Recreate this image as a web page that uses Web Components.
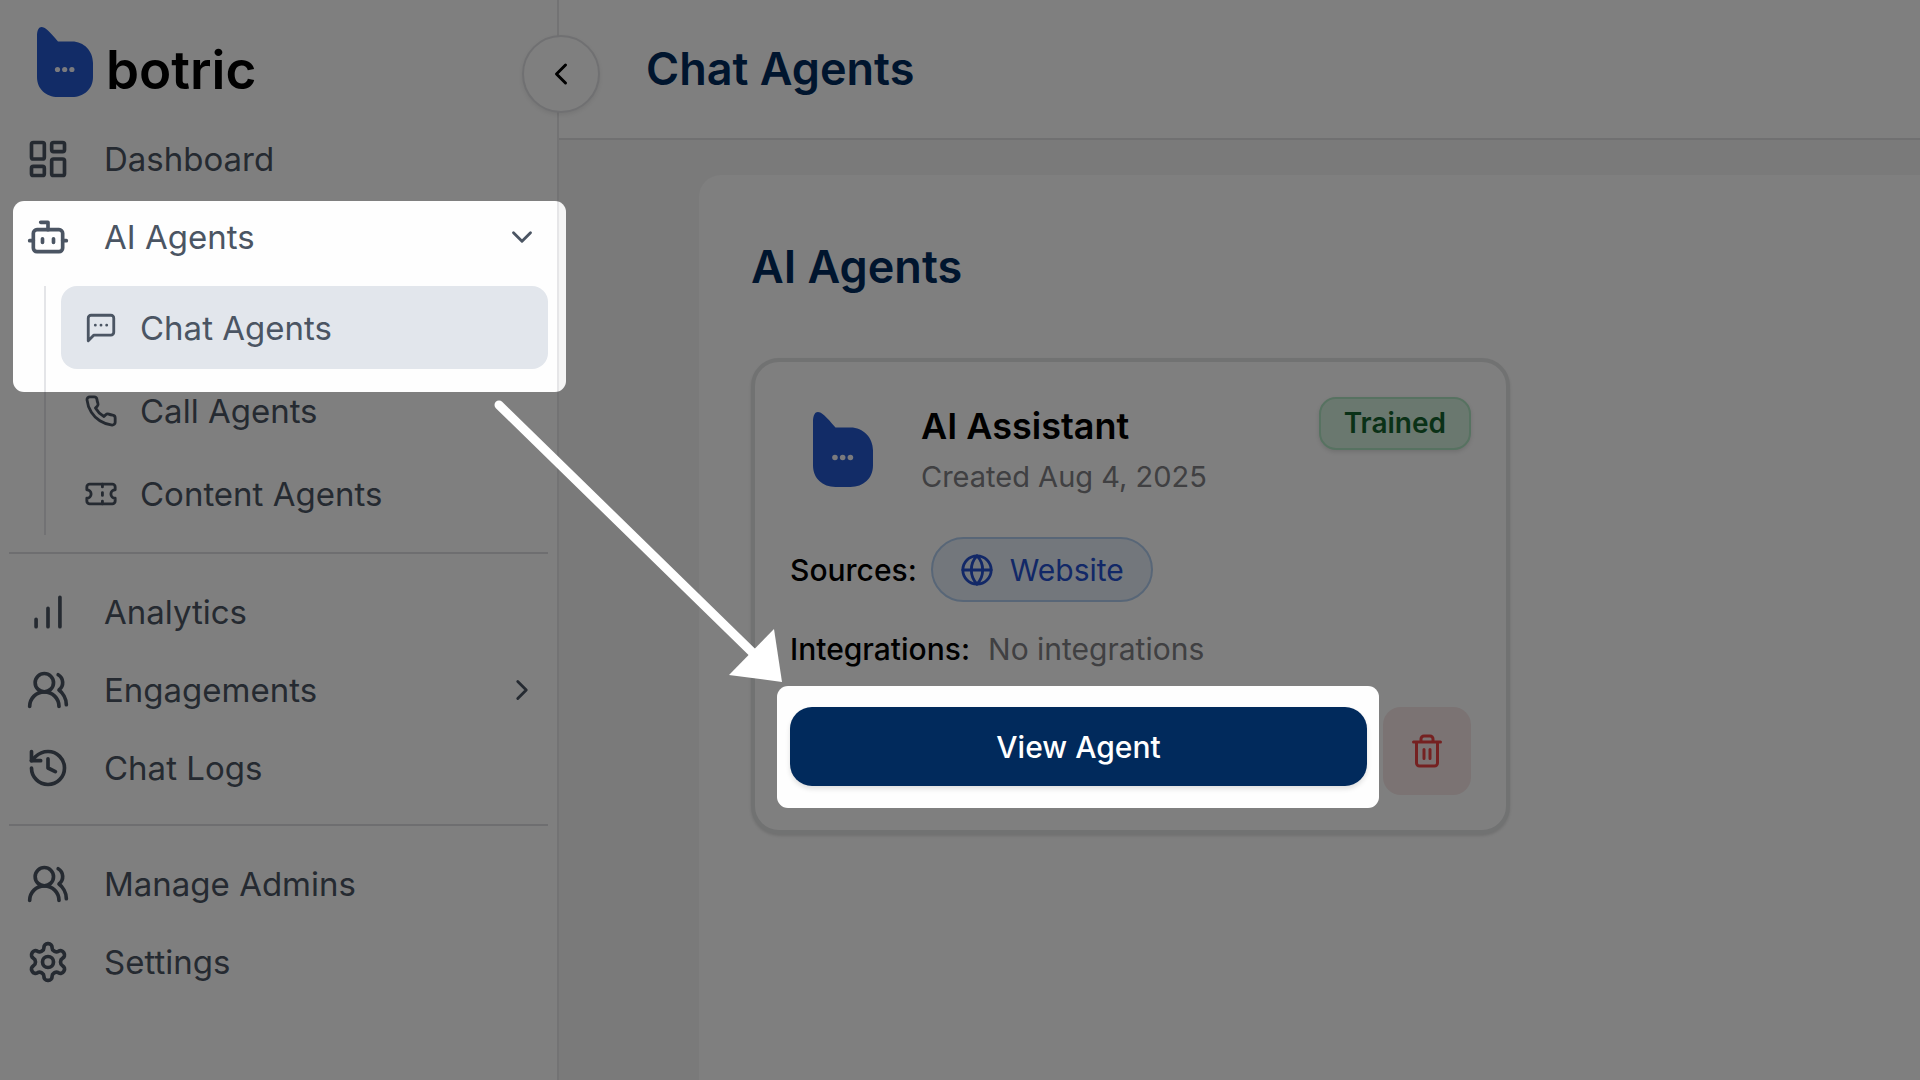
<!DOCTYPE html>
<html lang="en">
<head>
<meta charset="utf-8">
<title>Chat Agents - botric</title>
<style>
  html, body { margin: 0; height: 100%; }
  body { font-family: Inter, "Open Sans", sans-serif; background: #f5f5f5; overflow: hidden; }
</style>
</head>
<body>
<botric-app></botric-app>
<script>
const define = (name, html, setup) => {
  const tpl = document.createElement('template');
  tpl.innerHTML = html;
  customElements.define(name, class extends HTMLElement {
    constructor() {
      super();
      this.attachShadow({ mode: 'open' }).append(tpl.content.cloneNode(true));
    }
    connectedCallback() { if (setup) setup(this, this.shadowRoot); }
  });
};

const ICONS = {
  dashboard: '<rect width="7" height="9" x="3" y="3" rx="1"/><rect width="7" height="5" x="14" y="3" rx="1"/><rect width="7" height="9" x="14" y="12" rx="1"/><rect width="7" height="5" x="3" y="16" rx="1"/>',
  bot: '<path d="M12 8V4H8"/><rect width="16" height="12" x="4" y="8" rx="2"/><path d="M2 14h2M20 14h2M15 13v2M9 13v2"/>',
  chat: '<path d="M21 15a2 2 0 0 1-2 2H7l-4 4V5a2 2 0 0 1 2-2h14a2 2 0 0 1 2 2z"/><path d="M8 10h.01M12 10h.01M16 10h.01"/>',
  phone: '<path d="M22 16.92v3a2 2 0 0 1-2.18 2 19.79 19.79 0 0 1-8.63-3.07 19.5 19.5 0 0 1-6-6 19.79 19.79 0 0 1-3.07-8.67A2 2 0 0 1 4.11 2h3a2 2 0 0 1 2 1.72 12.84 12.84 0 0 0 .7 2.81 2 2 0 0 1-.45 2.11L8.09 9.91a16 16 0 0 0 6 6l1.27-1.27a2 2 0 0 1 2.11-.45 12.84 12.84 0 0 0 2.81.7A2 2 0 0 1 22 16.92z"/>',
  ticket: '<path d="M2 9a3 3 0 0 1 0 6v2a2 2 0 0 0 2 2h16a2 2 0 0 0 2-2v-2a3 3 0 0 1 0-6V7a2 2 0 0 0-2-2H4a2 2 0 0 0-2 2Z"/><path d="M13 5v2M13 17v2M13 11v2"/>',
  bars: '<path d="M18.5 20V4M12 20V10M5.5 20v-4"/>',
  users: '<path d="M18 21a8 8 0 0 0-16 0"/><circle cx="10" cy="8" r="5"/><path d="M22 20c0-3.37-2-6.5-4-8a5 5 0 0 0-.45-8.3"/>',
  history: '<path d="M3 12a9 9 0 1 0 9-9 9.75 9.75 0 0 0-6.74 2.74L3 8"/><path d="M3 3v5h5"/><path d="M12 7v5l4 2"/>',
  settings: '<path d="M12.22 2h-.44a2 2 0 0 0-2 2v.18a2 2 0 0 1-1 1.73l-.43.25a2 2 0 0 1-2 0l-.15-.08a2 2 0 0 0-2.73.73l-.22.38a2 2 0 0 0 .73 2.73l.15.1a2 2 0 0 1 1 1.72v.51a2 2 0 0 1-1 1.74l-.15.09a2 2 0 0 0-.73 2.73l.22.38a2 2 0 0 0 2.73.73l.15-.08a2 2 0 0 1 2 0l.43.25a2 2 0 0 1 1 1.73V20a2 2 0 0 0 2 2h.44a2 2 0 0 0 2-2v-.18a2 2 0 0 1 1-1.73l.43-.25a2 2 0 0 1 2 0l.15.08a2 2 0 0 0 2.73-.73l.22-.39a2 2 0 0 0-.73-2.73l-.15-.08a2 2 0 0 1-1-1.74v-.5a2 2 0 0 1 1-1.74l.15-.09a2 2 0 0 0 .73-2.73l-.22-.38a2 2 0 0 0-2.73-.73l-.15.08a2 2 0 0 1-2 0l-.43-.25a2 2 0 0 1-1-1.73V4a2 2 0 0 0-2-2z"/><circle cx="12" cy="12" r="3"/>',
  globe: '<circle cx="12" cy="12" r="10"/><path d="M12 2a14.5 14.5 0 0 0 0 20 14.5 14.5 0 0 0 0-20M2 12h20"/>',
  trash: '<path d="M3 6h18M19 6v14a2 2 0 0 1-2 2H7a2 2 0 0 1-2-2V6M8 6V4a2 2 0 0 1 2-2h4a2 2 0 0 1 2 2v2M10 11v6M14 11v6"/>',
  left: '<path d="m15 18-6-6 6-6"/>',
  right: '<path d="m9 18 6-6-6-6"/>',
  down: '<path d="m6 9 6 6 6-6"/>'
};

/* Stroke icon: <ui-icon name="..."> */
define('ui-icon', `
<style>
  :host { display: block; flex: none; width: var(--icon-size, 44px); height: var(--icon-size, 44px); }
  svg { display: block; width: 100%; height: 100%; }
</style>
<svg viewBox="0 0 24 24" fill="none" stroke="currentColor" stroke-width="2" stroke-linecap="round" stroke-linejoin="round" aria-hidden="true"></svg>`,
(el, root) => { root.querySelector('svg').innerHTML = ICONS[el.getAttribute('name')] || ''; });

/* Brand mark */
define('botric-mark', `
<style>
  :host { display: block; flex: none; width: var(--mark-width, 56px); }
  svg { display: block; width: 100%; }
</style>
<svg viewBox="0 0 56 70" role="img" aria-label="botric">
  <path fill="#2459cf" d="M0 9C0 3 2 0 4.500 0C8 0 12 4 21 14.500H35C47 14.500 56 24 56 36V50C56 62 47 70 35 70H21C9 70 0 62 0 50Z"/>
  <g fill="#f4f4fa"><circle cx="20.500" cy="42.500" r="2.600"/><circle cx="27.700" cy="42.500" r="2.600"/><circle cx="34.900" cy="42.500" r="2.600"/></g>
</svg>`);

const makeIcon = (className, name) => {
  const icon = document.createElement('ui-icon');
  icon.className = className;
  icon.setAttribute('name', name);
  return icon;
};

/* Sidebar row; "sub" makes the nested size, "active" the filled state, "end" adds a chevron */
define('nav-item', `
<style>
  :host { display: block; }
  a { display: flex; align-items: center; gap: 34px; height: 78px; padding: 0 9px 0 17px; color: #4b5563;
      font-size: 33px; line-height: 48px; text-decoration: none; white-space: nowrap; box-sizing: border-box; }
  .label { flex: 1; }
  .end { --icon-size: 34px; }
  :host([sub]) a { height: 83px; padding: 0 23px; gap: 22px; border-radius: 16px; }
  :host([sub]) { --icon-size: 34px; }
  :host([active]) a { background: #e2e6ec; }
</style>
<a href="#"><span class="label"><slot></slot></span></a>`,
(el, root) => {
  const link = root.querySelector('a');
  link.prepend(makeIcon('start', el.getAttribute('icon')));
  if (el.hasAttribute('end')) link.append(makeIcon('end', el.getAttribute('end')));
  if (el.hasAttribute('active')) link.setAttribute('aria-current', 'page');
});

define('side-bar', `
<style>
  :host { display: block; position: relative; box-sizing: border-box; width: 559px; flex: none;
          padding: 0 9px; background: #fefefe; border-right: 2px solid #e6e6e8; }
  .brand { display: flex; align-items: center; gap: 13px; height: 120px; padding: 4px 28px 0; box-sizing: border-box; }
  .word { font-size: 53px; line-height: 60px; font-weight: 600; color: #000; padding-top: 16px; }
  .sub { margin: 10px 0 0 35px; padding-left: 15px; border-left: 2px solid #e4e5e8; }
  hr { border: 0; height: 2px; margin: 17px 0 19px; background: #dcdde0; }
  button { position: absolute; right: -43px; top: 35px; width: 78px; height: 78px; padding: 0; box-sizing: border-box;
           display: grid; place-items: center; border-radius: 50%; border: 2px solid #e0e1e4; background: #fefefe;
           color: #000; box-shadow: 0 2px 4px rgba(0,0,0,.08); --icon-size: 36px; }
</style>
<div class="brand"><botric-mark></botric-mark><span class="word">botric</span></div>
<nav>
  <nav-item icon="dashboard">Dashboard</nav-item>
  <nav-item icon="bot" end="down">AI Agents</nav-item>
  <div class="sub">
    <nav-item sub active icon="chat">Chat Agents</nav-item>
    <nav-item sub icon="phone">Call Agents</nav-item>
    <nav-item sub icon="ticket">Content Agents</nav-item>
  </div>
  <hr>
  <nav-item icon="bars">Analytics</nav-item>
  <nav-item icon="users" end="right">Engagements</nav-item>
  <nav-item icon="history">Chat Logs</nav-item>
  <hr>
  <nav-item icon="users">Manage Admins</nav-item>
  <nav-item icon="settings">Settings</nav-item>
</nav>
<button type="button" aria-label="Collapse sidebar"><ui-icon name="left"></ui-icon></button>`);

define('agent-card', `
<style>
  :host { display: block; box-sizing: border-box; width: 759px; max-width: 100%; padding: 35px; background: #fefefe;
          border: 4px solid #e3e4e5; border-radius: 28px; box-shadow: 0 2px 3px rgba(0,0,0,.12);
          font-size: 30px; line-height: 42px; }
  .top { display: flex; gap: 26px; height: 104px; }
  .avatar { display: grid; place-items: center; width: 105px; --mark-width: 60px; }
  .who { flex: 1; }
  h3 { margin: 0; font-size: 36px; line-height: 58px; font-weight: 600; color: #000; }
  p { margin: 0; font-size: 29px; line-height: 44px; color: #808084; }
  .badge { align-self: flex-start; box-sizing: border-box; height: 53px; padding: 0 23px; border: 2px solid #aee4c2;
           border-radius: 17px; background: #d5f0de; color: #14632f; font-size: 28px; line-height: 49px; font-weight: 600;
           box-shadow: 0 2px 4px rgba(0,0,0,.12); }
  .row { display: flex; align-items: center; gap: 18px; color: #808084; }
  .row b { font-weight: 500; color: #000; }
  .sources { gap: 14px; margin-top: 36px; margin-bottom: 26px; }
  .pill { display: flex; align-items: center; gap: 16px; box-sizing: border-box; height: 65px; padding: 0 27px;
          border: 2px solid #b0cdee; border-radius: 33px; background: #e6eef9; color: #2450cf; --icon-size: 34px; }
  .actions { display: flex; align-items: flex-start; gap: 16px; margin-top: 37px; }
  button { border: 0; padding: 0; font: inherit; }
  .view { flex: 1; height: 79px; border-radius: 22px; background: #012a5c; color: #fff; font-weight: 500;
          box-shadow: 0 3px 5px rgba(0,0,0,.12); }
  .delete { display: grid; place-items: center; width: 88px; height: 88px; border-radius: 18px; background: #f6e6e6;
            color: #ea4343; --icon-size: 36px; }
</style>
<div class="top">
  <div class="avatar"><botric-mark></botric-mark></div>
  <div class="who"><h3>AI Assistant</h3><p>Created Aug 4, 2025</p></div>
  <span class="badge">Trained</span>
</div>
<div class="row sources"><b>Sources:</b><span class="pill"><ui-icon name="globe"></ui-icon>Website</span></div>
<div class="row"><b>Integrations:</b><span>No integrations</span></div>
<div class="actions">
  <button class="view" type="button">View Agent</button>
  <button class="delete" type="button" aria-label="Delete agent"><ui-icon name="trash"></ui-icon></button>
</div>`);

/* Dimming layer with two cut-outs and the pointer between them */
define('tour-overlay', `
<style>
  :host { position: absolute; inset: 0; pointer-events: none; }
  svg { display: block; width: 100%; height: 100%; }
</style>
<svg aria-hidden="true">
  <defs><mask id="holes">
    <rect width="100%" height="100%" fill="#fff"/>
    <rect x="13" y="201" width="553" height="191" rx="11" fill="#000"/>
    <rect x="777" y="686" width="602" height="122" rx="11" fill="#000"/>
  </mask></defs>
  <rect width="100%" height="100%" fill="#000" fill-opacity=".5" mask="url(#holes)"/>
  <path d="M499 405L754 654" stroke="#fff" stroke-width="9" stroke-linecap="round"/>
  <path d="M782 682L774 629L729 675Z" fill="#fff"/>
</svg>`);

define('botric-app', `
<style>
  :host { display: flex; position: relative; min-height: 100%; box-sizing: border-box; }
  main { flex: 1; min-width: 0; display: flex; flex-direction: column; }
  header { display: flex; align-items: center; height: 140px; box-sizing: border-box; padding: 0 87px;
           background: #fefefe; border-bottom: 2px solid #e0e1e2; }
  h1, h2 { margin: 0; font-size: 45px; line-height: 60px; font-weight: 600; color: #012a5c; }
  section { flex: 1; margin: 35px 0 0 140px; padding: 62px 52px; background: #fefefe; border-top-left-radius: 22px; }
  agent-card { margin-top: 61px; }
</style>
<side-bar></side-bar>
<main>
  <header><h1>Chat Agents</h1></header>
  <section><h2>AI Agents</h2><agent-card></agent-card></section>
</main>
<tour-overlay></tour-overlay>`);
</script>
</body>
</html>
